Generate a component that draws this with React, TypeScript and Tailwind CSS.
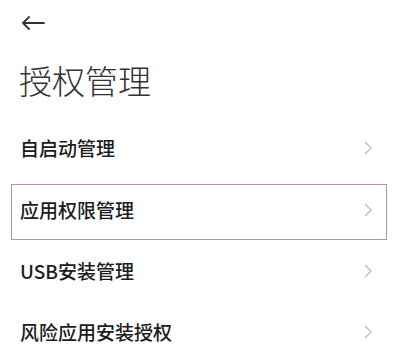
import React from "react";

const Chevron = () => (
  <svg width="9" height="14" viewBox="0 0 9 14" fill="none">
    <path d="M1.5 1.5 L7 7 L1.5 12.5" stroke="#bdbdbd" strokeWidth="1.4" strokeLinecap="round" strokeLinejoin="round" />
  </svg>
);

const font = { fontFamily: '"Noto Sans CJK SC", "Noto Sans", sans-serif' };

export default function App() {
  const rowText = "text-[19px] font-medium text-[#1c1c1c] leading-none";
  return (
    <div className="w-[400px] h-[350px] bg-white overflow-hidden" style={font}>
      <div className="h-[46px] flex items-center pl-[21px]">
        <svg width="24" height="14" viewBox="0 0 24 14" fill="none">
          <path d="M23 7 H2 M8 1 L2 7 L8 13" stroke="#333" strokeWidth="1.8" strokeLinecap="round" strokeLinejoin="round" />
        </svg>
      </div>
      <div className="h-[71px] pl-[19px] pt-[14px]">
        <div className="text-[33px] font-light text-[#333] leading-[40px]">授权管理</div>
      </div>
      <div className="h-[61px] flex items-center justify-between pl-5 pr-[27px]">
        <span className={rowText}>自启动管理</span>
        <Chevron />
      </div>
      <div className="mt-[6px] ml-[11px] mr-[13px] h-[56px] border border-[#b89499] flex items-center justify-between pl-[8px] pr-[13px] pb-[5px]">
        <span className={rowText}>应用权限管理</span>
        <Chevron />
      </div>
      <div className="h-[61px] flex items-center justify-between pl-5 pr-[27px]">
        <span className={rowText}>USB安装管理</span>
        <Chevron />
      </div>
      <div className="h-[61px] flex items-center justify-between pl-5 pr-[27px]">
        <span className={rowText}>风险应用安装授权</span>
        <Chevron />
      </div>
    </div>
  );
}
